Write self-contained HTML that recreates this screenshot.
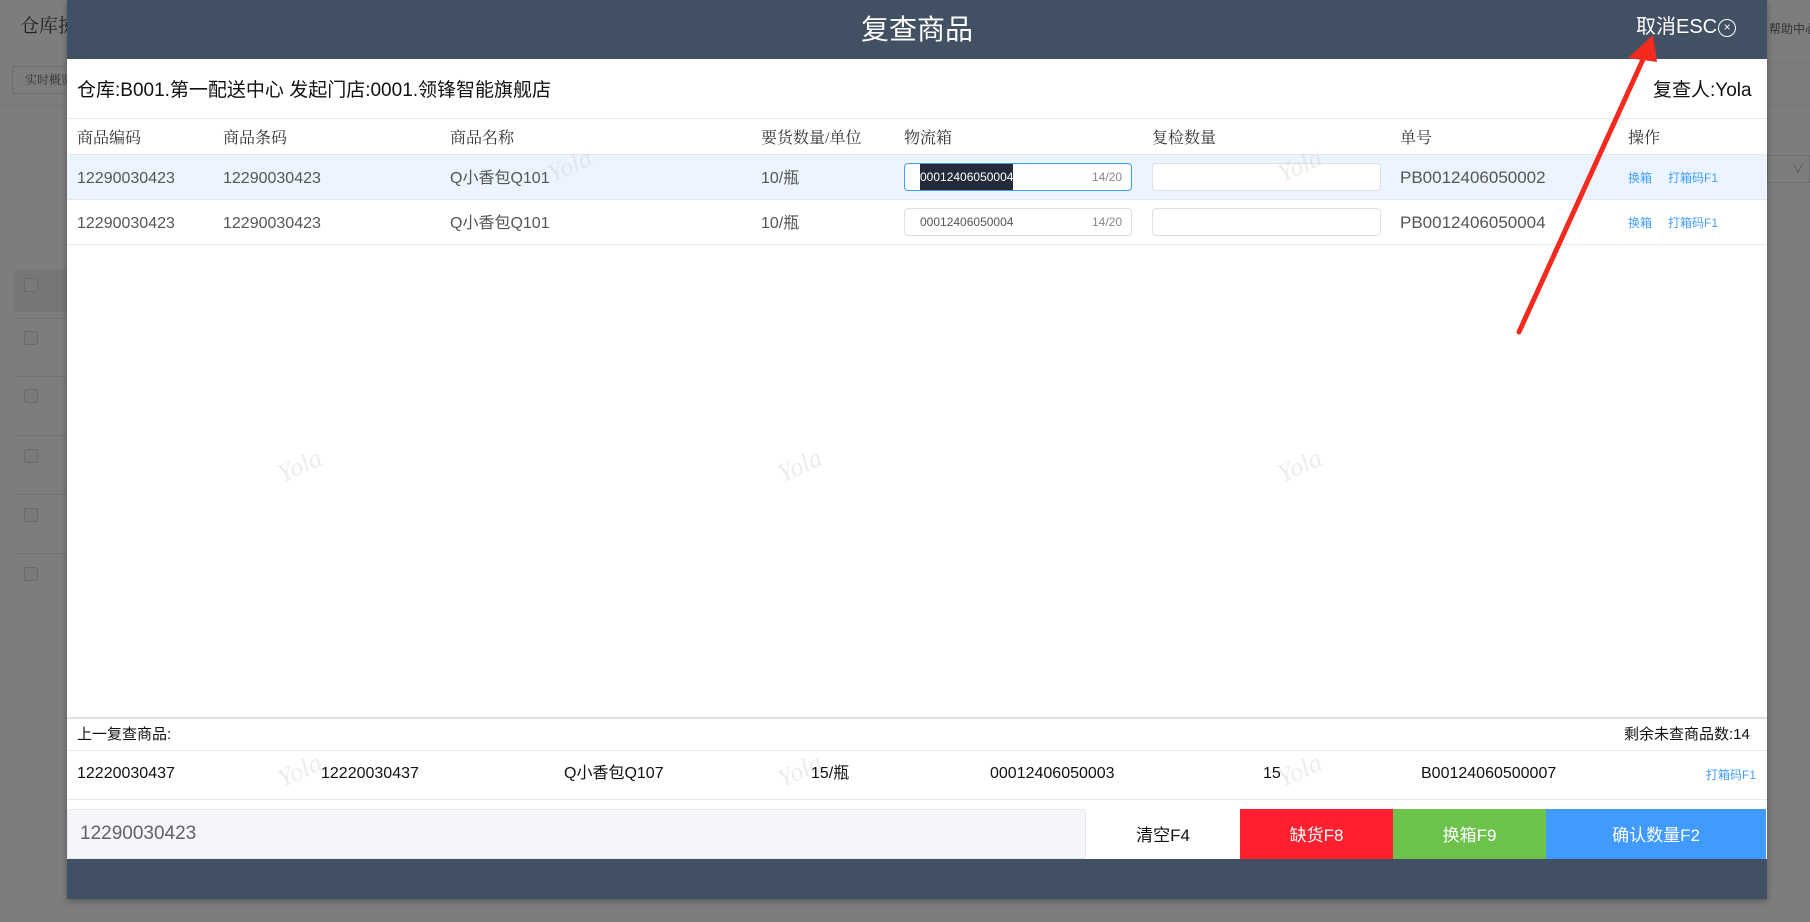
<!DOCTYPE html>
<html><head><meta charset="utf-8"><style>
*{margin:0;padding:0;box-sizing:border-box}
body{width:1810px;height:922px;overflow:hidden;background:#7d7d7d;font-family:"Liberation Sans","Noto Sans CJK SC",sans-serif;position:relative;line-height:1.2}
.a{position:absolute}
.m{left:67px;top:0;width:1700px;height:899px;background:#fff;position:absolute;box-shadow:0 2px 6px rgba(0,0,0,.3)}
.hd{left:0;top:0;width:1700px;height:59px;background:#425063;color:#fff}
.t{font-size:16px;color:#555;white-space:nowrap}
.th{font-size:16px;color:#333;font-family:"Liberation Serif","Noto Serif CJK SC",serif;white-space:nowrap}
.line{left:0;width:1700px;height:1px;background:#e4e7ee}
.inp{border:1px solid #dcdfe6;border-radius:4px;background:#fff}
.lk{font-size:12px;color:#409eff;white-space:nowrap}
.wm{color:rgba(200,200,200,.35);font-size:26px;font-family:"Liberation Serif",serif;font-style:italic;transform:rotate(-25deg)}
.btn{top:809px;height:50px;color:#fff;font-size:17px;display:flex;align-items:center;justify-content:center;padding-top:4px}
.cb{left:24px;width:14px;height:14px;border:1px solid #6a6a6a;background:#7a7a7a;border-radius:2px}
</style></head><body>
<div class="a" style="left:20px;top:16px;font-size:19px;color:#222;font-family:'Liberation Serif','Noto Serif CJK SC',serif">仓库拣</div>
<div class="a" style="left:12px;top:66px;width:70px;height:28px;border:1px solid #6e6e6e;font-size:12px;color:#333;padding:6px 0 0 12px;font-family:'Noto Serif CJK SC',serif">实时概览</div>
<div class="a" style="left:0;top:105px;width:1810px;height:1px;background:#777"></div>
<div class="a" style="left:14px;top:270px;width:60px;height:42px;background:#747678"></div>
<div class="a cb" style="top:278px"></div><div class="a cb" style="top:331px"></div><div class="a cb" style="top:389px"></div><div class="a cb" style="top:449px"></div><div class="a cb" style="top:508px"></div><div class="a cb" style="top:567px"></div>
<div class="a" style="left:14px;top:318px;width:60px;height:1px;background:#737373"></div>
<div class="a" style="left:14px;top:376px;width:60px;height:1px;background:#737373"></div>
<div class="a" style="left:14px;top:435px;width:60px;height:1px;background:#737373"></div>
<div class="a" style="left:14px;top:494px;width:60px;height:1px;background:#737373"></div>
<div class="a" style="left:14px;top:553px;width:60px;height:1px;background:#737373"></div>
<div class="a" style="left:1769px;top:22px;font-size:12px;color:#333;white-space:nowrap">帮助中心</div>
<div class="a" style="left:1767px;top:62px;width:43px;height:1px;background:#777"></div>
<div class="a" style="left:1767px;top:155px;width:43px;height:28px;border:1px solid #6e6e6e;font-size:12px;color:#555;padding:6px 0 0 24px">∨</div>

<div class="m">
<div class="a hd"><div class="a" style="left:0;width:1700px;top:13px;text-align:center;font-size:28px">复查商品</div>
<div class="a" style="left:1569px;top:15px;font-size:20px;white-space:nowrap">取消ESC<span style="display:inline-block;width:18px;height:18px;border:1.5px solid #fff;border-radius:50%;font-size:12px;text-align:center;line-height:15px;vertical-align:2px;margin-left:1px">×</span></div></div>
<div class="a" style="left:10px;top:80px;font-size:19px;color:#111;white-space:nowrap">仓库:B001.第一配送中心 发起门店:0001.领锋智能旗舰店</div>
<div class="a" style="left:1586px;top:80px;font-size:19px;color:#111;white-space:nowrap">复查人:Yola</div>
<div class="a line" style="top:118px"></div>
<div class="a th" style="left:10px;top:129px">商品编码</div>
<div class="a th" style="left:156px;top:129px">商品条码</div>
<div class="a th" style="left:383px;top:129px">商品名称</div>
<div class="a th" style="left:694px;top:129px">要货数量/单位</div>
<div class="a th" style="left:837px;top:129px">物流箱</div>
<div class="a th" style="left:1085px;top:129px">复检数量</div>
<div class="a th" style="left:1333px;top:129px">单号</div>
<div class="a th" style="left:1561px;top:129px">操作</div>
<div class="a line" style="top:154px"></div>
<div class="a" style="left:0;top:155px;width:1700px;height:44px;background:#ecf5ff"></div>
<div class="a line" style="top:199px"></div>
<div class="a line" style="top:244px"></div>

<div class="a t" style="left:10px;top:169px">12290030423</div>
<div class="a t" style="left:156px;top:169px">12290030423</div>
<div class="a t" style="left:383px;top:169px">Q小香包Q101</div>
<div class="a t" style="left:694px;top:169px">10/瓶</div>
<div class="a inp" style="left:837px;top:163px;width:228px;height:28px;border-color:#409eff"></div>
<div class="a" style="left:853px;top:164px;width:93px;height:26px;background:#232b3a;color:#fff;font-size:12px;line-height:26px">00012406050004</div>
<div class="a" style="left:1025px;top:170px;font-size:12px;color:#888">14/20</div>
<div class="a inp" style="left:1085px;top:163px;width:229px;height:28px"></div>
<div class="a t" style="left:1333px;top:168px;font-size:17px">PB0012406050002</div>
<div class="a lk" style="left:1561px;top:171px">换箱</div><div class="a lk" style="left:1601px;top:171px">打箱码F1</div>

<div class="a t" style="left:10px;top:214px">12290030423</div>
<div class="a t" style="left:156px;top:214px">12290030423</div>
<div class="a t" style="left:383px;top:214px">Q小香包Q101</div>
<div class="a t" style="left:694px;top:214px">10/瓶</div>
<div class="a inp" style="left:837px;top:208px;width:228px;height:28px"></div>
<div class="a" style="left:853px;top:209px;font-size:12px;line-height:26px;color:#555">00012406050004</div>
<div class="a" style="left:1025px;top:215px;font-size:12px;color:#888">14/20</div>
<div class="a inp" style="left:1085px;top:208px;width:229px;height:28px"></div>
<div class="a t" style="left:1333px;top:213px;font-size:17px">PB0012406050004</div>
<div class="a lk" style="left:1561px;top:216px">换箱</div><div class="a lk" style="left:1601px;top:216px">打箱码F1</div>

<div class="a wm" style="left:210px;top:450px">Yola</div>
<div class="a wm" style="left:710px;top:450px">Yola</div>
<div class="a wm" style="left:1210px;top:450px">Yola</div>
<div class="a wm" style="left:480px;top:150px">Yola</div>
<div class="a wm" style="left:1210px;top:150px">Yola</div>
<div class="a wm" style="left:210px;top:755px">Yola</div>
<div class="a wm" style="left:710px;top:755px">Yola</div>
<div class="a wm" style="left:1210px;top:755px">Yola</div>

<div class="a" style="left:0;top:717px;width:1700px;height:2px;background:#dcdfe6"></div>
<div class="a" style="left:10px;top:726px;font-size:15px;color:#111">上一复查商品:</div>
<div class="a" style="left:1557px;top:726px;font-size:15px;color:#111;white-space:nowrap">剩余未查商品数:14</div>
<div class="a line" style="top:750px"></div>
<div class="a" style="top:764px;left:0;width:1700px;font-size:16px;color:#111">
<span class="a" style="left:10px">12220030437</span><span class="a" style="left:254px">12220030437</span><span class="a" style="left:497px;white-space:nowrap">Q小香包Q107</span><span class="a" style="left:744px">15/瓶</span><span class="a" style="left:923px">00012406050003</span><span class="a" style="left:1196px">15</span><span class="a" style="left:1354px">B00124060500007</span></div>
<div class="a lk" style="left:1639px;top:768px">打箱码F1</div>
<div class="a line" style="top:799px"></div>
<div class="a" style="left:0;top:809px;width:1019px;height:50px;background:#f5f6fa;border:1px solid #e4e7ee;border-radius:3px;font-size:19px;color:#606266;padding:13px 0 0 12px">12290030423</div>
<div class="a btn" style="left:1019px;width:154px;color:#111">清空F4</div>
<div class="a btn" style="left:1173px;width:153px;background:#ff1f2e">缺货F8</div>
<div class="a btn" style="left:1326px;width:153px;background:#6cc24a">换箱F9</div>
<div class="a btn" style="left:1479px;width:220px;background:#409aff">确认数量F2</div>
<div class="a" style="left:0;top:859px;width:1700px;height:40px;background:#425063"></div>
</div>
<svg class="a" style="left:0;top:0" width="1810" height="922"><line x1="1519" y1="332" x2="1645" y2="55" stroke="#f52a1f" stroke-width="5" stroke-linecap="round"/><polygon points="1653,35 1628,58 1657,62" fill="#f52a1f"/></svg>
</body></html>
